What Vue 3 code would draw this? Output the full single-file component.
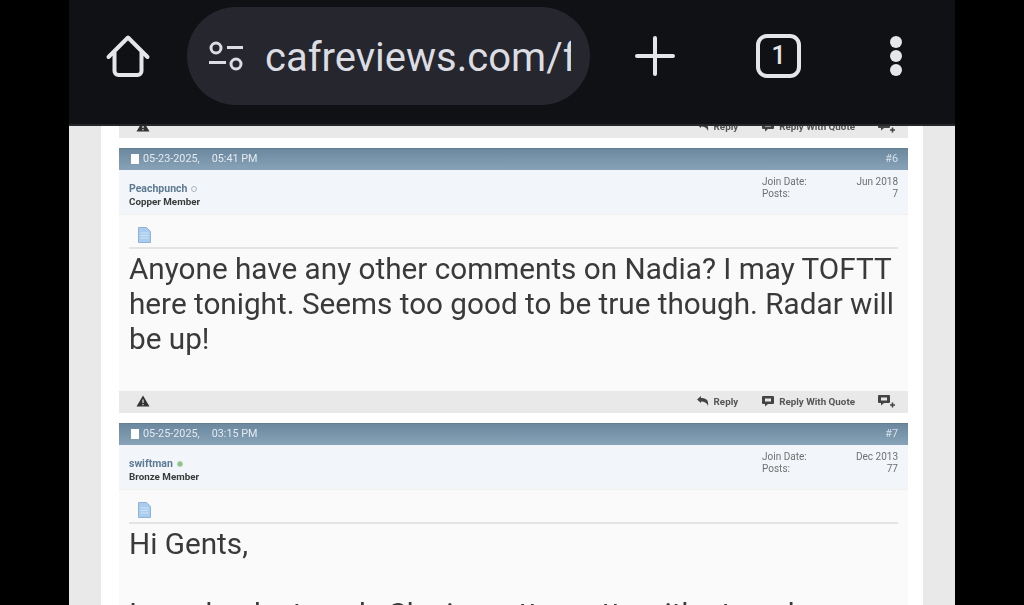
<script setup>
const posts = [
  {
    id: 6,
    date: '05-23-2025,',
    time: '05:41 PM',
    user: 'Peachpunch',
    rank: 'Copper Member',
    online: false,
    joined: 'Jun 2018',
    count: '7',
    lines: ['Anyone have any other comments on Nadia? I may TOFTT', 'here tonight. Seems too good to be true though. Radar will', 'be up!'],
    bodyClass: 'post-tall',
  },
  {
    id: 7,
    date: '05-25-2025,',
    time: '03:15 PM',
    user: 'swiftman',
    rank: 'Bronze Member',
    online: true,
    joined: 'Dec 2013',
    count: '77',
    lines: ['Hi Gents,', '', 'I was back at work. She is pretty pretty with at work'],
    bodyClass: '',
  },
]
</script>

<template>
  <div class="screen">
    <div class="frame">
      <header class="toolbar">
        <svg class="home-icon" viewBox="0 0 46 46" width="46" height="46">
          <path d="M3.5 24 23 4.500 42.500 24M9.500 19V38a4 4 0 0 0 4 4h19a4 4 0 0 0 4-4V19" fill="none" stroke="#e6e6ea" stroke-width="4" stroke-linecap="round" stroke-linejoin="round" />
        </svg>
        <div class="omnibox">
          <svg class="tune-icon" viewBox="0 0 38 34" width="38" height="34">
            <circle cx="9" cy="9" r="5" fill="none" stroke="#dcdde2" stroke-width="3" />
            <path d="M20 8.500h16M2 23.500h17" stroke="#dcdde2" stroke-width="3" />
            <circle cx="29" cy="25" r="5" fill="none" stroke="#dcdde2" stroke-width="3" />
          </svg>
          <div class="url">cafreviews.com/f<span class="url-fade">o</span></div>
        </div>
        <svg class="plus-icon" viewBox="0 0 42 42" width="42" height="42">
          <path d="M21 3V39M3 21H39" stroke="#e6e6ea" stroke-width="4" stroke-linecap="round" />
        </svg>
        <div class="tabs-icon">1</div>
        <div class="dots"><i></i><i></i><i></i></div>
      </header>

      <div class="page">
        <div class="page-inner">
          <div class="post-foot foot-clipped">
            <div class="foot-row">
              <svg class="warn-icon" viewBox="0 0 14 12" width="14" height="12"><path d="M7 .5 13.500 11.500H.5Z" fill="#333" /><path d="M7 4.500V8M7 9V10.200" stroke="#e8e8e8" stroke-width="1.200" /></svg>
              <div class="foot-actions">
                <span class="action">
                  <svg viewBox="0 0 14 12" width="14" height="12"><path d="M1 4.500 5 1V3C10 3 13 5 12 11 11 8 9 6.500 5 6.500V8Z" fill="#444" /></svg>
                  Reply
                </span>
                <span class="action action-quote">
                  <svg viewBox="0 0 14 12" width="14" height="12"><path d="M2 1H12A1 1 0 0 1 13 2V8A1 1 0 0 1 12 9H7L4 11.500V9H2A1 1 0 0 1 1 8V2A1 1 0 0 1 2 1Z" fill="#444" /><path d="M4 3.500H10V6.500H4Z" fill="#e8e8e8" /></svg>
                  Reply With Quote
                </span>
                <svg class="multi" viewBox="0 0 19 14" width="19" height="14"><path d="M2 1H12A1 1 0 0 1 13 2V8A1 1 0 0 1 12 9H7L4 11.500V9H2A1 1 0 0 1 1 8V2A1 1 0 0 1 2 1Z" fill="#444" /><path d="M4 3.500H10V6.500H4Z" fill="#e8e8e8" /><path d="M15.500 8.500V13.500M13 11H18" stroke="#444" stroke-width="1.600" /></svg>
              </div>
            </div>
          </div>

          <article v-for="post in posts" :key="post.id" class="post">
            <div class="post-head">
              <span class="head-left">
                <span class="page-glyph"></span>
                <span class="head-date">{{ post.date }}</span>
                <span class="head-time">{{ post.time }}</span>
              </span>
              <span class="head-num">#{{ post.id }}</span>
            </div>
            <div class="post-user">
              <div>
                <div class="user-name">
                  {{ post.user }}
                  <span class="status" :class="{ 'is-online': post.online }"></span>
                </div>
                <div class="user-rank">{{ post.rank }}</div>
              </div>
              <dl class="user-meta">
                <dt>Join Date:</dt><dd>{{ post.joined }}</dd>
                <dt>Posts:</dt><dd>{{ post.count }}</dd>
              </dl>
            </div>
            <div class="post-body" :class="post.bodyClass">
              <div class="title-row">
                <svg viewBox="0 0 14 16" width="14" height="16">
                  <path d="M1.500.5H9.500L13.500 4.500V15.500H1.500Z" fill="#a9cdee" stroke="#8fb2d6" />
                  <path d="M3.500 6H11.500M3.500 8.500H11.500M3.500 11H11.500" stroke="#cfe3f5" />
                </svg>
              </div>
              <div class="post-text">
                <div v-for="(line, i) in post.lines" :key="i" class="text-line">{{ line }}</div>
              </div>
            </div>
            <div v-if="post.id === 6" class="post-foot">
              <div class="foot-row">
                <svg class="warn-icon" viewBox="0 0 14 12" width="14" height="12"><path d="M7 .5 13.500 11.500H.5Z" fill="#333" /><path d="M7 4.500V8M7 9V10.200" stroke="#e8e8e8" stroke-width="1.200" /></svg>
                <div class="foot-actions">
                  <span class="action">
                    <svg viewBox="0 0 14 12" width="14" height="12"><path d="M1 4.500 5 1V3C10 3 13 5 12 11 11 8 9 6.500 5 6.500V8Z" fill="#444" /></svg>
                    Reply
                  </span>
                  <span class="action action-quote">
                    <svg viewBox="0 0 14 12" width="14" height="12"><path d="M2 1H12A1 1 0 0 1 13 2V8A1 1 0 0 1 12 9H7L4 11.500V9H2A1 1 0 0 1 1 8V2A1 1 0 0 1 2 1Z" fill="#444" /><path d="M4 3.500H10V6.500H4Z" fill="#e8e8e8" /></svg>
                    Reply With Quote
                  </span>
                  <svg class="multi" viewBox="0 0 19 14" width="19" height="14"><path d="M2 1H12A1 1 0 0 1 13 2V8A1 1 0 0 1 12 9H7L4 11.500V9H2A1 1 0 0 1 1 8V2A1 1 0 0 1 2 1Z" fill="#444" /><path d="M4 3.500H10V6.500H4Z" fill="#e8e8e8" /><path d="M15.500 8.500V13.500M13 11H18" stroke="#444" stroke-width="1.600" /></svg>
                </div>
              </div>
            </div>
          </article>
        </div>
      </div>
    </div>
  </div>
</template>

<style>
html, body {
  margin: 0;
  background: #000;
}
</style>

<style scoped>
.screen {
  display: flex;
  justify-content: center;
  width: 1024px;
  height: 605px;
  overflow: hidden;
  background: #000;
  font-family: Roboto, "Liberation Sans", sans-serif;
}

.frame {
  width: 886px;
  flex-shrink: 0;
  display: flex;
  flex-direction: column;
}

.toolbar {
  height: 126px;
  box-sizing: border-box;
  flex-shrink: 0;
  background: #101114;
  border-bottom: 2px solid #26272a;
  display: flex;
  align-items: center;
  padding: 0 0 13px 36px;
}

.home-icon { flex-shrink: 0; }

.omnibox {
  width: 403px;
  height: 98px;
  margin-left: 36px;
  border-radius: 49px;
  background: #25262e;
  display: flex;
  align-items: center;
  padding-left: 20px;
  box-sizing: border-box;
  flex-shrink: 0;
}

.tune-icon { flex-shrink: 0; }

.url {
  margin-left: 20px;
  padding-top: 3px;
  width: 306px;
  overflow: hidden;
  white-space: nowrap;
  font-size: 40px;
  color: #dcdde2;
}

.url-fade { opacity: 0.35; }

.plus-icon {
  margin-left: 44px;
  flex-shrink: 0;
}

.tabs-icon {
  width: 45px;
  height: 44px;
  margin-left: 80px;
  box-sizing: border-box;
  border: 4.5px solid #e6e6ea;
  border-radius: 11px;
  display: flex;
  align-items: center;
  justify-content: center;
  color: #e6e6ea;
  font-size: 25px;
  font-weight: 500;
  flex-shrink: 0;
}

.dots {
  margin-left: 89px;
  display: flex;
  flex-direction: column;
  gap: 2px;
}

.dots i {
  display: block;
  width: 12px;
  height: 12px;
  border-radius: 50%;
  background: #e6e6ea;
}

.page {
  flex: 1;
  min-height: 0;
  background: #e9e9e9;
  padding: 0 32px;
  overflow: hidden;
}

.page-inner {
  background: #fff;
  height: 100%;
  padding: 0 15px 0 18px;
  overflow: hidden;
  filter: blur(0.35px);
}

.post { margin-top: 10px; }

.post-head {
  height: 22px;
  box-sizing: border-box;
  background: linear-gradient(#6b889f, #88a3b7);
  border-top: 1px solid #64808f;
  display: flex;
  align-items: center;
  justify-content: space-between;
  padding: 0 10px 2px 12px;
  font-size: 10.8px;
  color: #e4eaf0;
}

.head-left {
  display: flex;
  align-items: center;
}

.page-glyph {
  width: 8px;
  height: 10px;
  background: #fff;
  margin-right: 4px;
}

.head-time { margin-left: 12px; }

.head-num { color: #d5e0ea; }

.post-user {
  height: 45px;
  box-sizing: border-box;
  background: #f2f6fa;
  border-bottom: 1px solid #f0f0f0;
  display: flex;
  justify-content: space-between;
  padding: 13px 10px 0 10px;
}

.user-name {
  font-size: 10.5px;
  line-height: 12.5px;
  font-weight: 700;
  color: #5d7a93;
  display: flex;
  align-items: center;
  gap: 4px;
}

.status {
  width: 4px;
  height: 4px;
  border: 1px solid #aab4bd;
  border-radius: 50%;
  margin-top: -1px;
}

.status.is-online {
  background: #8fc08a;
  border-color: #a7d3a2;
}

.user-rank {
  font-size: 9.8px;
  line-height: 12.5px;
  font-weight: 700;
  color: #3a3a3a;
}

.user-meta {
  width: 136px;
  margin: -7px 0 0;
  display: grid;
  grid-template-columns: 1fr auto;
  align-content: start;
  font-size: 10px;
  line-height: 12px;
  color: #707070;
}

.user-meta dd {
  margin: 0;
  text-align: right;
}

.post-body {
  background: #fafafa;
  padding: 12px 10px 0 10px;
  box-sizing: border-box;
}

.post-tall { height: 176px; }

.title-row {
  height: 20px;
  border-bottom: 2px solid #e4e4e4;
  padding-left: 8px;
}

.post-text {
  margin-top: 2px;
  font-size: 29.7px;
  line-height: 35px;
  color: #3a3a3a;
}

.text-line {
  min-height: 35px;
  white-space: nowrap;
}

.post-foot {
  height: 22px;
  background: #e9e9e9;
}

.foot-clipped {
  height: 12px;
  overflow: hidden;
  display: flex;
  align-items: flex-end;
}

.foot-row {
  flex: 1 0 22px;
  height: 22px;
  box-sizing: border-box;
  display: flex;
  align-items: center;
  justify-content: space-between;
  padding: 0 12px 2px 17px;
}

.foot-actions {
  display: flex;
  align-items: center;
  font-size: 9.8px;
  font-weight: 700;
  color: #555;
}

.action {
  display: flex;
  align-items: center;
  gap: 4px;
}

.action-quote { margin-left: 23px; }

.multi { margin-left: 22px; }
</style>
